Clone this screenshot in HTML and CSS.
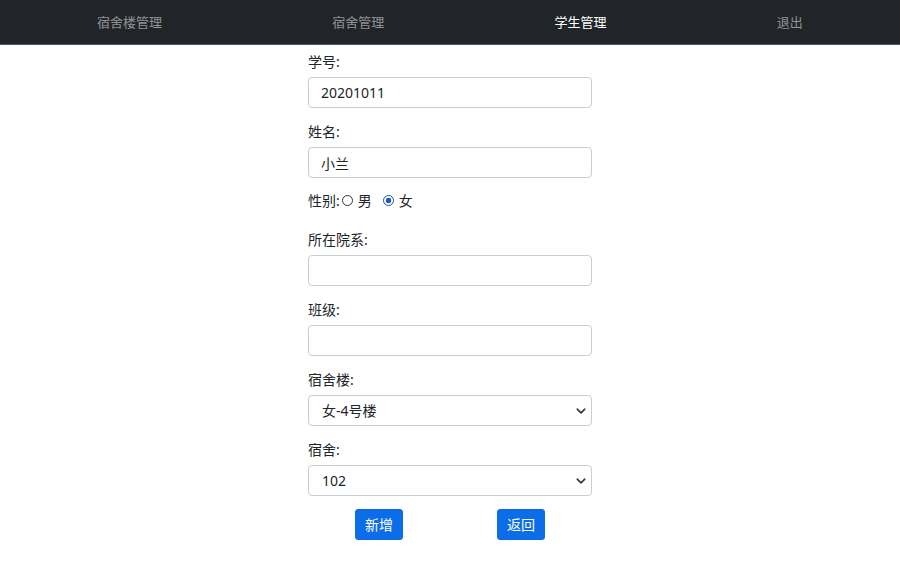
FILE: index.html
```html
<!DOCTYPE html>
<html lang="zh-CN">
<head>
<meta charset="utf-8">
<title>学生管理</title>
<link rel="stylesheet" href="styles.css">
</head>
<body>
<nav class="navbar">
  <a class="nav-link" href="#">宿舍楼管理</a>
  <a class="nav-link" href="#">宿舍管理</a>
  <a class="nav-link active" href="#">学生管理</a>
  <a class="nav-link" href="#">退出</a>
</nav>
<main class="container">
  <form class="form">
    <div class="field">
      <label class="label">学号:</label>
      <input class="control" type="text" value="20201011">
    </div>
    <div class="field">
      <label class="label">姓名:</label>
      <input class="control" type="text" value="小兰">
    </div>
    <div class="radio-row">
      <span>性别:</span>
      <label class="radio-item"><input class="radio" type="radio" name="sex">男</label>
      <label class="radio-item"><input class="radio" type="radio" name="sex" checked>女</label>
    </div>
    <div class="field">
      <label class="label">所在院系:</label>
      <input class="control" type="text" value="">
    </div>
    <div class="field">
      <label class="label">班级:</label>
      <input class="control" type="text" value="">
    </div>
    <div class="field">
      <label class="label">宿舍楼:</label>
      <div class="select-wrap">
        <select class="control select"><option>女-4号楼</option></select>
        <svg class="chevron" width="10" height="10" viewBox="0 0 16 16"><path d="M2 5l6 6 6-6" fill="none" stroke="#343a40" stroke-width="2.6" stroke-linecap="round" stroke-linejoin="round"/></svg>
      </div>
    </div>
    <div class="field">
      <label class="label">宿舍:</label>
      <div class="select-wrap">
        <select class="control select"><option>102</option></select>
        <svg class="chevron" width="10" height="10" viewBox="0 0 16 16"><path d="M2 5l6 6 6-6" fill="none" stroke="#343a40" stroke-width="2.6" stroke-linecap="round" stroke-linejoin="round"/></svg>
      </div>
    </div>
    <div class="buttons">
      <button class="btn" type="button">新增</button>
      <button class="btn" type="button">返回</button>
    </div>
  </form>
</main>
</body>
</html>
```
FILE: styles.css
```css
* { box-sizing: border-box; }
body {
  margin: 0;
  background: #fff;
  color: #212529;
  font-family: "Noto Sans", "Noto Sans CJK SC", sans-serif;
  font-size: 14px;
  line-height: 21px;
}
.navbar {
  display: flex;
  height: 45px;
  padding: 0 12px;
  background: #212529;
  border-bottom: 1px solid #53585d;
  align-items: center;
}
.nav-link {
  flex: 1 1 auto;
  text-align: center;
  font-size: 13px;
  color: rgba(255,255,255,0.5);
  text-decoration: none;
  line-height: 20px;
  margin-top: -1px;
}
.nav-link.active { color: #fff; }
.container {
  width: 284px;
  margin: 0 auto;
  padding-top: 6px;
}
.field { margin-bottom: 13px; }
.label { display: block; margin-bottom: 5px; }
.control {
  display: block;
  width: 100%;
  height: 31px;
  padding: 4px 12px;
  font: inherit;
  color: #212529;
  background: #fff;
  border: 1px solid #c9ced3;
  border-radius: 4px;
  outline: none;
}
.select-wrap { position: relative; }
.select { appearance: none; -webkit-appearance: none; padding-left: 13px; padding-right: 30px; }
.chevron { position: absolute; right: 6px; top: 11px; pointer-events: none; }
.radio-row {
  display: flex;
  align-items: center;
  margin-top: -1px;
  margin-bottom: 18px;
}
.radio-item { display: flex; align-items: center; margin-right: 9px; }
.radio {
  appearance: none;
  -webkit-appearance: none;
  width: 11px;
  height: 11px;
  margin: 0 5px 0 2px;
  border: 1px solid #333;
  border-radius: 50%;
  background: #fff;
}
.radio:checked {
  border-color: #1d4fa8;
  background: radial-gradient(circle, #1d5cc4 0 2.6px, #fff 3.1px);
}
.buttons {
  display: flex;
  justify-content: space-around;
}
.btn {
  height: 31px;
  padding: 4px 9px;
  font: inherit;
  color: #fff;
  background: #0b6ee8;
  border: 1px solid #0b6ee8;
  border-radius: 3px;
}
```
